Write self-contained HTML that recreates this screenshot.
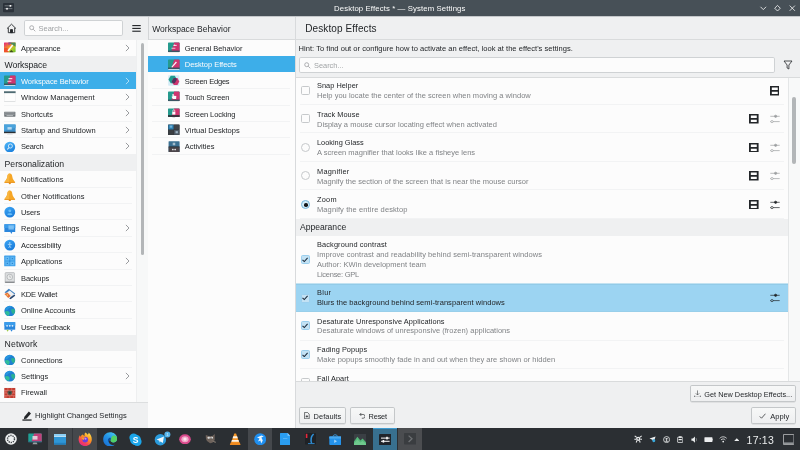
<!DOCTYPE html>
<html><head><meta charset="utf-8"><title>Desktop Effects — System Settings</title>
<style>
html,body{margin:0;padding:0;}
body{width:800px;height:450px;overflow:hidden;background:#eff0f1;position:relative;font-family:"Liberation Sans",sans-serif;color:#232629;font-size:7.5px;}
.abs{position:absolute;}
.t{position:absolute;white-space:nowrap;line-height:1;}
#titlebar{left:0;top:0;width:800px;height:16px;background:#475057;}
#sidebar{left:0;top:39.5px;width:136.5px;height:362px;background:#fcfcfc;overflow:hidden;}
.row{position:absolute;left:0;width:136.5px;height:16.4px;}
.row .lbl{position:absolute;left:21px;top:5.5px;letter-spacing:-0.05px;white-space:nowrap;line-height:1;font-size:7.5px;}
.row.sel{background:#3daee9;color:#fcfcfc;}
.row.hdr{background:#eff0f1;}
.row.hdr .lbl{left:4.5px;font-size:8.7px;top:5.4px;letter-spacing:-0.1px;}
.sepline{position:absolute;height:1px;background:#f2f3f4;}
.ic{position:absolute;left:4.4px;top:2.7px;width:11.6px;height:11.6px;}
.chev{position:absolute;left:125px;top:4.4px;width:5px;height:8px;}
#col2{left:148.3px;top:39.5px;width:146.5px;height:388px;background:#fcfcfc;overflow:hidden;}
#col2 .row{width:146.5px;}
#col2 .row .lbl{left:36.5px;}
#col2 .ic{left:20.1px;}
.btn{position:absolute;box-sizing:border-box;border:0.6px solid #c4c7c9;border-radius:1.8px;background:linear-gradient(#f7f8f8,#eeeff0);box-shadow:0 0.5px 0.5px rgba(0,0,0,0.12);}
.field{position:absolute;box-sizing:border-box;border:0.6px solid #cfd2d4;border-radius:1.8px;background:#fcfcfc;}
#list{left:296px;top:78px;width:491.6px;height:303px;background:#fcfcfc;overflow:hidden;}
.item{position:absolute;left:0;width:491.6px;}
.item .ti{position:absolute;left:21px;white-space:nowrap;line-height:1;font-size:7.35px;color:#232629;}
.item .de{position:absolute;left:21px;white-space:nowrap;line-height:1;font-size:7.5px;color:#808386;}
.cb{position:absolute;left:4.9px;width:9.1px;height:9.1px;box-sizing:border-box;border:0.7px solid #c6c9cb;border-radius:1.6px;background:#fcfcfc;}
.cb.on{border-color:#9bcfee;background:#c3e2f4;}
.rb{position:absolute;left:4.9px;width:9.1px;height:9.1px;box-sizing:border-box;border:0.7px solid #c6c9cb;border-radius:50%;background:#fcfcfc;}
.rb.on{border-color:#74b4da;background:#d3ebf8;}
#taskbar{left:0;top:428px;width:800px;height:22px;background:#2b2f33;}
#root{position:absolute;left:0;top:0;width:800px;height:450px;overflow:hidden;will-change:transform;background:#eff0f1;}
</style></head><body><div id="root">

<div id="titlebar" class="abs"></div>
<div class="abs" style="left:0;top:16px;width:800px;height:1px;background:#c4c7ca;"></div>
<div class="t" style="left:334px;top:5.2px;font-size:7.75px;color:#fcfcfc;letter-spacing:0.118px;">Desktop Effects * — System Settings</div>
<svg class="abs" style="left:3px;top:3.4px" width="11" height="9.2" viewBox="0 0 11 9.2"><rect x="0" y="0" width="11" height="9.2" rx="0.9" fill="#2b323a"/><rect x="1.6" y="2.5" width="7.8" height="0.7" fill="#8d9499"/><rect x="1.6" y="5.4" width="7.8" height="0.7" fill="#8d9499"/><rect x="6.6" y="2" width="1.6" height="1.7" fill="#fcfcfc"/><rect x="3.2" y="4.9" width="1.6" height="1.7" fill="#fcfcfc"/></svg>
<svg class="abs" style="left:756px;top:3px" width="42" height="11" viewBox="0 0 42 11" fill="none" stroke="#fcfcfc" stroke-width="0.8"><path d="M4.5 3.8 L7.3 6.6 L10.1 3.8"/><path d="M21.5 2.4 L24.3 5.2 L21.5 8 L18.7 5.2 Z"/><path d="M33.7 2.6 L38.9 7.8 M38.9 2.6 L33.7 7.8"/></svg>
<div class="abs" style="left:0;top:16.5px;width:148px;height:23px;background:#eff0f1;"></div>
<svg class="abs" style="left:6px;top:23px" width="11" height="11" viewBox="0 0 11 11" fill="none" stroke="#232629" stroke-width="0.9"><path d="M1 5.6 L5.5 1.2 L10 5.6"/><path d="M2.3 4.8 V9.7 H8.7 V4.8"/><path d="M4.5 9.7 V6.6 H6.5 V9.7z" fill="#232629"/></svg>
<div class="field" style="left:24px;top:20.3px;width:99.3px;height:16.2px;"></div>
<svg class="abs" style="left:29px;top:24.7px" width="7.2" height="7.2" viewBox="0 0 8 8" fill="none" stroke="#97999c" stroke-width="0.85"><circle cx="3" cy="3" r="2.2"/><path d="M4.7 4.7 L7 7"/></svg>
<div class="t" style="left:38.5px;top:24.6px;font-size:7.5px;color:#a0a3a5;">Search...</div>
<svg class="abs" style="left:131.8px;top:24px" width="9.4" height="9" viewBox="0 0 10 9"><rect x="0.3" y="0.8" width="9" height="1.2" fill="#232629"/><rect x="0.3" y="3.8" width="9" height="1.2" fill="#232629"/><rect x="0.3" y="6.8" width="9" height="1.2" fill="#232629"/></svg>
<div id="sidebar" class="abs">
<div class="row" style="top:0.0px">
<svg class="ic" viewBox="0 0 12 12"><defs><linearGradient id="ga" x1="0" y1="0" x2="1" y2="1"><stop offset="0" stop-color="#e3207e"/><stop offset="0.5" stop-color="#f4a321"/><stop offset="0.72" stop-color="#a6cf2a"/><stop offset="1" stop-color="#6cbf2a"/></linearGradient></defs><rect x="0" y="0.5" width="12" height="10" rx="0.6" fill="url(#ga)"/><path d="M4.5 0.5 H12 V5 L9 3z" fill="#4a8f5a"/><path d="M4 0.5 H8 L5 3.5z" fill="#9b3aa0" opacity="0.75"/><path d="M0 6.5 L3.5 6 L5 10.5 H0z" fill="#f0502c"/><path d="M3.4 8.8 L8.4 2.6 L9.6 3.6 L5 9.6z" fill="#fcfcfc"/><path d="M5.4 10.5 L7.6 8.4 L10 10.5z" fill="#3f4a1c"/></svg>
<span class="lbl" style="letter-spacing:-0.085px;">Appearance</span>
<svg class="chev" viewBox="0 0 5 8" fill="none" stroke="#808386" stroke-width="0.8"><path d="M0.9 0.9 L4 4 L0.9 7.1"/></svg>
</div>
<div class="row hdr" style="top:16.4px">
<span class="lbl" style="letter-spacing:-0.095px;">Workspace</span>
</div>
<div class="row sel" style="top:32.8px">
<svg class="ic" viewBox="0 0 12 12"><rect x="0" y="0.6" width="12" height="9.6" rx="0.8" fill="#259a8d"/><path d="M6.4 0.6 h4.8 a0.8 0.8 0 0 1 .8 .8 v8.8 h-8.6z" fill="#cf3570"/><rect x="0" y="8.9" width="12" height="1.4" fill="#2f4f5c"/><rect x="0.4" y="10.3" width="11.2" height="0.9" fill="#e4e6e7"/><rect x="4.6" y="3.3" width="4" height="1" fill="#fcfcfc"/><rect x="3.4" y="6" width="4.2" height="1" fill="#f5d6e2"/></svg>
<span class="lbl" style="letter-spacing:-0.081px;">Workspace Behavior</span>
<svg class="chev" viewBox="0 0 5 8" fill="none" stroke="#c9e8f8" stroke-width="0.8"><path d="M0.9 0.9 L4 4 L0.9 7.1"/></svg>
</div>
<div class="row" style="top:49.2px">
<svg class="ic" viewBox="0 0 12 12"><rect x="0.2" y="0.4" width="11.6" height="10.6" fill="#fdfdfd" stroke="#e4e6e7" stroke-width="0.4"/><rect x="0" y="0.3" width="12" height="1.9" fill="#4d6a72"/><rect x="0.2" y="10.4" width="11.6" height="0.8" fill="#d9dbdc"/></svg>
<span class="lbl" style="letter-spacing:0.063px;">Window Management</span>
<svg class="chev" viewBox="0 0 5 8" fill="none" stroke="#808386" stroke-width="0.8"><path d="M0.9 0.9 L4 4 L0.9 7.1"/></svg>
</div>
<div class="sepline" style="left:4px;width:128px;top:65.1px"></div>
<div class="row" style="top:65.6px">
<svg class="ic" viewBox="0 0 12 12"><rect x="0.2" y="3.8" width="11.6" height="5.2" rx="0.4" fill="#71777b"/><rect x="1" y="4.6" width="10" height="0.9" fill="#a9adb0"/><rect x="1" y="6.1" width="10" height="0.9" fill="#9a9ea1"/><rect x="2.6" y="7.5" width="6.8" height="0.8" fill="#c5c8ca"/></svg>
<span class="lbl" style="letter-spacing:0.035px;">Shortcuts</span>
<svg class="chev" viewBox="0 0 5 8" fill="none" stroke="#808386" stroke-width="0.8"><path d="M0.9 0.9 L4 4 L0.9 7.1"/></svg>
</div>
<div class="sepline" style="left:4px;width:128px;top:81.5px"></div>
<div class="row" style="top:82.0px">
<svg class="ic" viewBox="0 0 12 12"><rect x="0" y="0.6" width="12" height="8.2" rx="0.5" fill="#3f8fc8"/><path d="M0 0.6 H12 V4 L0 7z" fill="#4aa3dc"/><rect x="3.6" y="3.2" width="4.4" height="2.6" fill="#cfe6f6" opacity="0.8"/><rect x="0" y="8" width="12" height="1.5" fill="#2b3035"/><rect x="4" y="9.7" width="4" height="0.8" fill="#c9cccf"/><rect x="3" y="10.5" width="6" height="0.7" fill="#dfe1e3"/></svg>
<span class="lbl" style="letter-spacing:0.019px;">Startup and Shutdown</span>
<svg class="chev" viewBox="0 0 5 8" fill="none" stroke="#808386" stroke-width="0.8"><path d="M0.9 0.9 L4 4 L0.9 7.1"/></svg>
</div>
<div class="sepline" style="left:4px;width:128px;top:97.9px"></div>
<div class="row" style="top:98.4px">
<svg class="ic" viewBox="0 0 12 12"><defs><linearGradient id="gs" x1="0.2" y1="0" x2="0.7" y2="1"><stop offset="0" stop-color="#4db5f7"/><stop offset="1" stop-color="#1a7fdc"/></linearGradient></defs><circle cx="6" cy="6.3" r="5.6" fill="url(#gs)"/><circle cx="6.6" cy="5.2" r="2.1" fill="none" stroke="#d9eefc" stroke-width="0.9"/><path d="M5.1 6.8 L3.4 8.8" stroke="#d9eefc" stroke-width="1.1"/></svg>
<span class="lbl" style="letter-spacing:-0.194px;">Search</span>
<svg class="chev" viewBox="0 0 5 8" fill="none" stroke="#808386" stroke-width="0.8"><path d="M0.9 0.9 L4 4 L0.9 7.1"/></svg>
</div>
<div class="row hdr" style="top:114.8px">
<span class="lbl" style="letter-spacing:0.014px;">Personalization</span>
</div>
<div class="row" style="top:131.2px">
<svg class="ic" viewBox="0 0 12 12"><path d="M6 0.6 C4.2 0.6 3.6 2.2 3.4 4 C3.1 6.6 1.6 8.2 0.5 9.4 C0.4 9.9 0.6 10.1 1 10.1 H11 C11.4 10.1 11.6 9.9 11.5 9.4 C10.4 8.2 8.9 6.6 8.6 4 C8.4 2.2 7.8 0.6 6 0.6z" fill="#f6a625"/><path d="M6 0.6 C4.2 0.6 3.6 2.2 3.4 4 C3.1 6.6 1.6 8.2 0.5 9.4 C0.4 9.9 0.6 10.1 1 10.1 H5z" fill="#f8b53f"/><path d="M1 9.3 H11 L11.5 9.7 C11.5 10 11.3 10.1 11 10.1 H1 C0.7 10.1 0.5 10 0.5 9.7z" fill="#e8901a"/><circle cx="6" cy="10.6" r="1.1" fill="#e38a18"/></svg>
<span class="lbl" style="letter-spacing:0.135px;">Notifications</span>
</div>
<div class="sepline" style="left:4px;width:128px;top:147.1px"></div>
<div class="row" style="top:147.6px">
<svg class="ic" viewBox="0 0 12 12"><path d="M6 0.6 C4.2 0.6 3.6 2.2 3.4 4 C3.1 6.6 1.6 8.2 0.5 9.4 C0.4 9.9 0.6 10.1 1 10.1 H11 C11.4 10.1 11.6 9.9 11.5 9.4 C10.4 8.2 8.9 6.6 8.6 4 C8.4 2.2 7.8 0.6 6 0.6z" fill="#f6a625"/><path d="M6 0.6 C4.2 0.6 3.6 2.2 3.4 4 C3.1 6.6 1.6 8.2 0.5 9.4 C0.4 9.9 0.6 10.1 1 10.1 H5z" fill="#f8b53f"/><path d="M1 9.3 H11 L11.5 9.7 C11.5 10 11.3 10.1 11 10.1 H1 C0.7 10.1 0.5 10 0.5 9.7z" fill="#e8901a"/><circle cx="6" cy="10.6" r="1.1" fill="#e38a18"/></svg>
<span class="lbl" style="letter-spacing:0.100px;">Other Notifications</span>
</div>
<div class="sepline" style="left:4px;width:128px;top:163.5px"></div>
<div class="row" style="top:164.0px">
<svg class="ic" viewBox="0 0 12 12"><defs><linearGradient id="gu" x1="0.2" y1="0" x2="0.7" y2="1"><stop offset="0" stop-color="#3aa4f4"/><stop offset="1" stop-color="#1879d8"/></linearGradient></defs><circle cx="6" cy="6.3" r="5.6" fill="url(#gu)"/><circle cx="6" cy="5" r="1.5" fill="#69bdf7"/><path d="M3.2 8.8 C3.6 7 8.4 7 8.8 8.8 C7.6 9.8 4.4 9.8 3.2 8.8z" fill="#69bdf7"/></svg>
<span class="lbl" style="letter-spacing:-0.077px;">Users</span>
</div>
<div class="sepline" style="left:4px;width:128px;top:179.9px"></div>
<div class="row" style="top:180.4px">
<svg class="ic" viewBox="0 0 12 12"><path d="M0.4 1.4 H11.6 V9.2 H8.6 L7.6 11.4 L6.6 9.2 H0.4z" fill="#2a86dc"/><path d="M0.4 1.4 H11.6 V5.2 H0.4z" fill="#3a9bea"/><rect x="4.6" y="2.4" width="5.6" height="4.4" fill="#8fcaf6" opacity="0.8"/></svg>
<span class="lbl" style="letter-spacing:-0.035px;">Regional Settings</span>
<svg class="chev" viewBox="0 0 5 8" fill="none" stroke="#808386" stroke-width="0.8"><path d="M0.9 0.9 L4 4 L0.9 7.1"/></svg>
</div>
<div class="sepline" style="left:4px;width:128px;top:196.3px"></div>
<div class="row" style="top:196.8px">
<svg class="ic" viewBox="0 0 12 12"><circle cx="6" cy="6.3" r="5.6" fill="url(#gu)"/><circle cx="6" cy="4.2" r="0.8" fill="#b8defa"/><path d="M4 5.6 H8 M6 5.6 V7.4 M6 7.4 L4.8 9.2 M6 7.4 L7.2 9.2" stroke="#b8defa" stroke-width="0.8" fill="none"/></svg>
<span class="lbl" style="letter-spacing:-0.050px;">Accessibility</span>
</div>
<div class="sepline" style="left:4px;width:128px;top:212.7px"></div>
<div class="row" style="top:213.2px">
<svg class="ic" viewBox="0 0 12 12"><rect x="0.2" y="0.6" width="11.6" height="11" rx="0.6" fill="#3d9fe9"/><rect x="1.4" y="1.8" width="4" height="3.8" fill="#66bbf4"/><rect x="6.6" y="1.8" width="4" height="3.8" fill="#5ab3f1"/><rect x="1.4" y="6.8" width="4" height="3.8" fill="#5ab3f1"/><rect x="6.6" y="6.8" width="4" height="3.8" fill="#66bbf4"/><circle cx="3.4" cy="3.7" r="0.6" fill="#1f78c8"/><circle cx="8.6" cy="3.7" r="0.6" fill="#1f78c8"/><circle cx="3.4" cy="8.7" r="0.6" fill="#1f78c8"/><circle cx="8.6" cy="8.7" r="0.6" fill="#1f78c8"/><circle cx="6" cy="6.2" r="0.6" fill="#1f78c8"/></svg>
<span class="lbl" style="letter-spacing:0.063px;">Applications</span>
<svg class="chev" viewBox="0 0 5 8" fill="none" stroke="#808386" stroke-width="0.8"><path d="M0.9 0.9 L4 4 L0.9 7.1"/></svg>
</div>
<div class="sepline" style="left:4px;width:128px;top:229.1px"></div>
<div class="row" style="top:229.6px">
<svg class="ic" viewBox="0 0 12 12"><rect x="1.2" y="0.6" width="9.6" height="10.8" rx="0.8" fill="#dcdedf" stroke="#a4a7aa" stroke-width="0.6"/><rect x="1.2" y="9.9" width="9.6" height="1.5" fill="#8a8d90"/><circle cx="6" cy="5.2" r="2.9" fill="#ebecec" stroke="#9b9ea1" stroke-width="0.6"/><path d="M6 3.6 V5.4 H7.4" fill="none" stroke="#9b9ea1" stroke-width="0.6"/></svg>
<span class="lbl" style="letter-spacing:-0.081px;">Backups</span>
</div>
<div class="sepline" style="left:4px;width:128px;top:245.5px"></div>
<div class="row" style="top:246.0px">
<svg class="ic" viewBox="0 0 12 12"><path d="M0.6 4.4 L5 0.8 L11.6 5.6 L7.2 9.6z" fill="#3d7fc0"/><path d="M1.4 5.6 L6 2.6 L10.8 6.4 L6.6 9.6z" fill="#eeeff0"/><path d="M0.4 6.2 L3.6 4.6 L7 8.4 L4.4 10.4z" fill="#e6733a"/><path d="M5.4 10.6 L10.8 6.8 L11.6 8 L6.8 11.6z" fill="#27436b"/><circle cx="3.4" cy="7.2" r="0.8" fill="#f8d66a"/></svg>
<span class="lbl" style="letter-spacing:-0.186px;">KDE Wallet</span>
</div>
<div class="sepline" style="left:4px;width:128px;top:261.9px"></div>
<div class="row" style="top:262.4px">
<svg class="ic" viewBox="0 0 12 12"><circle cx="6" cy="6.3" r="5.6" fill="#1f80d2"/><path d="M1.2 3.6 C3 1.2 6.4 0.4 8.6 1.4 C7.6 2.8 5 3.2 3.6 4.8 C2.6 5.8 1.4 5.6 1.2 3.6z" fill="#2796e0"/><path d="M1 7 C2.4 5.6 4.4 6 5.4 7.2 C6.4 8.4 5.6 10 4.6 11.4 C2.6 10.8 1.2 9 1 7z" fill="#2fbd9b"/><path d="M7.4 4.6 C8.8 3.6 10.6 4 11.4 5.2 C11.8 7 11 8.6 9.8 9.6 C8.4 9 7 6.4 7.4 4.6z" fill="#2bb093"/></svg>
<span class="lbl" style="letter-spacing:0.027px;">Online Accounts</span>
</div>
<div class="sepline" style="left:4px;width:128px;top:278.3px"></div>
<div class="row" style="top:278.8px">
<svg class="ic" viewBox="0 0 12 12"><path d="M0.4 1.2 H11.6 V9 H0.4z" fill="#2a86dc"/><path d="M0.4 1.2 H11.6 V5 H0.4z" fill="#3a9bea"/><path d="M6.6 9 H9 L7.8 11z" fill="#2a86dc"/><path d="M2.6 9 H5 L3.6 11.2z" fill="#9fcf4a"/><circle cx="3.2" cy="5" r="0.9" fill="#e6f3fd"/><circle cx="6" cy="5" r="0.9" fill="#e6f3fd"/><circle cx="8.8" cy="5" r="0.9" fill="#e6f3fd"/></svg>
<span class="lbl" style="letter-spacing:-0.127px;">User Feedback</span>
</div>
<div class="row hdr" style="top:295.2px">
<span class="lbl" style="letter-spacing:0.170px;">Network</span>
</div>
<div class="row" style="top:311.6px">
<svg class="ic" viewBox="0 0 12 12"><circle cx="6" cy="6.3" r="5.6" fill="#1f80d2"/><path d="M1.2 3.6 C3 1.2 6.4 0.4 8.6 1.4 C7.6 2.8 5 3.2 3.6 4.8 C2.6 5.8 1.4 5.6 1.2 3.6z" fill="#2796e0"/><path d="M1 7 C2.4 5.6 4.4 6 5.4 7.2 C6.4 8.4 5.6 10 4.6 11.4 C2.6 10.8 1.2 9 1 7z" fill="#2fbd9b"/><path d="M7.4 4.6 C8.8 3.6 10.6 4 11.4 5.2 C11.8 7 11 8.6 9.8 9.6 C8.4 9 7 6.4 7.4 4.6z" fill="#2bb093"/></svg>
<span class="lbl" style="letter-spacing:-0.008px;">Connections</span>
</div>
<div class="sepline" style="left:4px;width:128px;top:327.5px"></div>
<div class="row" style="top:328.0px">
<svg class="ic" viewBox="0 0 12 12"><circle cx="6" cy="6.3" r="5.6" fill="#1f80d2"/><path d="M1.2 3.6 C3 1.2 6.4 0.4 8.6 1.4 C7.6 2.8 5 3.2 3.6 4.8 C2.6 5.8 1.4 5.6 1.2 3.6z" fill="#2796e0"/><path d="M1 7 C2.4 5.6 4.4 6 5.4 7.2 C6.4 8.4 5.6 10 4.6 11.4 C2.6 10.8 1.2 9 1 7z" fill="#2fbd9b"/><path d="M7.4 4.6 C8.8 3.6 10.6 4 11.4 5.2 C11.8 7 11 8.6 9.8 9.6 C8.4 9 7 6.4 7.4 4.6z" fill="#2bb093"/></svg>
<span class="lbl" style="letter-spacing:0.013px;">Settings</span>
<svg class="chev" viewBox="0 0 5 8" fill="none" stroke="#808386" stroke-width="0.8"><path d="M0.9 0.9 L4 4 L0.9 7.1"/></svg>
</div>
<div class="sepline" style="left:4px;width:128px;top:343.9px"></div>
<div class="row" style="top:344.4px">
<svg class="ic" viewBox="0 0 12 12"><rect x="0.3" y="1" width="11.4" height="10.6" fill="#c43c30"/><g stroke="#e8a59c" stroke-width="0.45"><path d="M0.3 3.6 H11.7 M0.3 6.3 H11.7 M0.3 9 H11.7 M4 1 V3.6 M8 1 V3.6 M2 3.6 V6.3 M6 3.6 V6.3 M10 3.6 V6.3 M4 6.3 V9 M8 6.3 V9 M2 9 V11.6 M6 9 V11.6 M10 9 V11.6"/></g><circle cx="6" cy="6" r="2.5" fill="#4a5a4e" opacity="0.9"/><circle cx="6" cy="6" r="1.1" fill="#2f3a33"/></svg>
<span class="lbl" style="letter-spacing:0.020px;">Firewall</span>
</div>
</div>
<div class="abs" style="left:136.5px;top:39.5px;width:11.5px;height:362px;background:#f7f8f8;"></div>
<div class="abs" style="left:140.6px;top:43px;width:3.8px;height:212.4px;border-radius:2px;background:#b3b6b8;"></div>
<div class="abs" style="left:147.6px;top:17px;width:0.7px;height:22.5px;background:#d3d5d7;"></div><div class="abs" style="left:136.3px;top:39.5px;width:0.6px;height:362px;background:#eeeff0;"></div>
<div class="abs" style="left:0;top:401.5px;width:148.3px;height:26.5px;background:#eff0f1;border-top:0.6px solid #dcdedf;"></div>
<svg class="abs" style="left:22px;top:411px" width="10" height="10" viewBox="0 0 10 10"><path d="M2.4 5.8 L6.8 0.6 L9 2.4 L4.6 7.6 L1.8 8.2z" fill="#232629"/><rect x="0.4" y="8.4" width="9.2" height="1.3" fill="#232629"/></svg>
<div class="t" style="left:35.1px;top:412.3px;font-size:7.5px;letter-spacing:0.027px;">Highlight Changed Settings</div>
<div class="abs" style="left:148.8px;top:16.5px;width:146.5px;height:23px;background:#eff0f1;"></div>
<div class="t" style="left:152.2px;top:25px;font-size:8.5px;letter-spacing:0.007px;">Workspace Behavior</div>
<div class="abs" style="left:148.8px;top:39.2px;width:146.5px;height:0.7px;background:#d9dbdc;"></div>
<div id="col2" class="abs">
<div class="row" style="top:0.0px"><svg class="ic" viewBox="0 0 12 12"><rect x="0" y="0.6" width="12" height="9.6" rx="0.8" fill="#259a8d"/><path d="M6.4 0.6 h4.8 a0.8 0.8 0 0 1 .8 .8 v8.8 h-8.6z" fill="#cf3570"/><rect x="0" y="8.9" width="12" height="1.4" fill="#2f4f5c"/><rect x="0.4" y="10.3" width="11.2" height="0.9" fill="#e4e6e7"/><rect x="5.6" y="3" width="3.4" height="0.9" fill="#fcfcfc"/><path d="M6.4 2.4 L7.6 3.4 L6.4 4.4z" fill="#fcfcfc"/><rect x="3.6" y="6" width="4" height="0.9" fill="#f5d6e2"/></svg><span class="lbl" style="letter-spacing:-0.048px;">General Behavior</span></div>
<div class="row sel" style="top:16.4px"><svg class="ic" viewBox="0 0 12 12"><rect x="0" y="0.6" width="12" height="9.6" rx="0.8" fill="#259a8d"/><path d="M6.4 0.6 h4.8 a0.8 0.8 0 0 1 .8 .8 v8.8 h-8.6z" fill="#cf3570"/><rect x="0" y="8.9" width="12" height="1.4" fill="#2f4f5c"/><rect x="0.4" y="10.3" width="11.2" height="0.9" fill="#e4e6e7"/><path d="M3.4 8.2 L8.2 2.6 L9.2 3.6 L4.4 8.8z" fill="#fcfcfc"/></svg><span class="lbl" style="letter-spacing:-0.026px;">Desktop Effects</span></div>
<div class="row" style="top:32.8px"><svg class="ic" viewBox="0 0 12 12"><rect x="0.2" y="0.3" width="11.6" height="10.9" rx="0.8" fill="#d3ebf5"/><path d="M0.5 4.6 L2.8 0.9 H7 L9.2 4.6 L7 8.6 H2.8z" fill="#1f9b8f"/><path d="M3.8 6.8 L6 3.2 H9.8 L11.7 6.8 L9.8 10.4 H6z" fill="#cf3570"/><path d="M3.8 6.8 L6 3.2 H8.4 L9.2 4.6 L7 8.6 H4.9z" fill="#4d3560"/></svg><span class="lbl" style="letter-spacing:-0.209px;">Screen Edges</span></div>
<div class="sepline" style="left:4px;width:138px;top:48.7px"></div>
<div class="row" style="top:49.2px"><svg class="ic" viewBox="0 0 12 12"><rect x="0" y="0.6" width="12" height="9.6" rx="0.8" fill="#259a8d"/><path d="M6.4 0.6 h4.8 a0.8 0.8 0 0 1 .8 .8 v8.8 h-8.6z" fill="#cf3570"/><rect x="0" y="8.9" width="12" height="1.4" fill="#2f4f5c"/><rect x="0.4" y="10.3" width="11.2" height="0.9" fill="#e4e6e7"/><path d="M4.6 3 L5.8 3 L6 4.8 L8.6 5.2 L8.4 8.4 H5 L3.6 6 L4.6 5.8z" fill="#fcfcfc"/></svg><span class="lbl" style="letter-spacing:-0.105px;">Touch Screen</span></div>
<div class="sepline" style="left:4px;width:138px;top:65.1px"></div>
<div class="row" style="top:65.6px"><svg class="ic" viewBox="0 0 12 12"><rect x="0" y="0.4" width="12" height="8.8" rx="0.6" fill="#259a8d"/><path d="M6.4 0.4 h5 a0.6 0.6 0 0 1 .6 .6 v8.2 h-8.6z" fill="#cf3570"/><rect x="0" y="7.4" width="12" height="1.8" fill="#2a3238"/><rect x="4.4" y="4" width="3.2" height="2.8" fill="#fcfcfc"/><path d="M5 4 V2.8 A1 1 0 0 1 7 2.8 V4" fill="none" stroke="#fcfcfc" stroke-width="0.7"/><rect x="4.6" y="9.6" width="2.8" height="0.7" fill="#c9cccf"/></svg><span class="lbl" style="letter-spacing:-0.078px;">Screen Locking</span></div>
<div class="sepline" style="left:4px;width:138px;top:81.5px"></div>
<div class="row" style="top:82.0px"><svg class="ic" viewBox="0 0 12 12"><rect x="0" y="0.4" width="12" height="11" rx="0.6" fill="#33373b"/><rect x="0.3" y="0.7" width="5.5" height="5" fill="#2d7eae"/><rect x="1.8" y="1.6" width="2.6" height="2.2" fill="#6fb3d8"/><rect x="6.3" y="0.7" width="5.4" height="5" fill="#3f4348"/><rect x="0.3" y="6.2" width="5.5" height="4.9" fill="#3a3e42"/><rect x="6.3" y="6.2" width="5.4" height="4.9" fill="#4d5a66"/><rect x="7.8" y="7.4" width="2.4" height="2.2" fill="#9fb4c4"/></svg><span class="lbl" style="letter-spacing:0.033px;">Virtual Desktops</span></div>
<div class="sepline" style="left:4px;width:138px;top:97.9px"></div>
<div class="row" style="top:98.4px"><svg class="ic" viewBox="0 0 12 12"><rect x="0.6" y="0.2" width="11.4" height="11.2" rx="0.5" fill="#3b7092"/><rect x="0.6" y="6.2" width="11.4" height="5.2" fill="#4b464b"/><rect x="0.6" y="5.6" width="11.4" height="0.9" fill="#2a3036"/><rect x="5" y="1.8" width="0.8" height="2.6" fill="#e8eef2"/><rect x="6.6" y="1.8" width="0.8" height="2.6" fill="#e8eef2"/><circle cx="5" cy="8.8" r="0.9" fill="#e8e8e8"/><circle cx="7.4" cy="8.8" r="0.9" fill="#e8e8e8"/></svg><span class="lbl" style="letter-spacing:0.001px;">Activities</span></div>
<div class="sepline" style="left:4px;width:138px;top:114.3px"></div>
</div>
<div class="abs" style="left:295.3px;top:17px;width:0.8px;height:411px;background:#d8dadc;"></div>
<div class="abs" style="left:296px;top:16.5px;width:504px;height:23px;background:#eff0f1;"></div>
<div class="t" style="left:305.2px;top:23.5px;font-size:10px;letter-spacing:0.110px;">Desktop Effects</div>
<div class="abs" style="left:296px;top:39px;width:504px;height:0.8px;background:#d9dbdc;"></div>
<div class="t" style="left:298.6px;top:44.7px;font-size:7.55px;letter-spacing:0.020px;">Hint: To find out or configure how to activate an effect, look at the effect's settings.</div>
<div class="field" style="left:299px;top:57.2px;width:475.6px;height:16.2px;"></div>
<svg class="abs" style="left:304.2px;top:61.9px" width="7.2" height="7.2" viewBox="0 0 8 8" fill="none" stroke="#97999c" stroke-width="0.85"><circle cx="3" cy="3" r="2.2"/><path d="M4.7 4.7 L7 7"/></svg>
<div class="t" style="left:314px;top:61.7px;font-size:7.4px;color:#a0a3a5;">Search...</div>
<svg class="abs" style="left:783px;top:60px" width="10" height="10" viewBox="0 0 10 10" fill="none" stroke="#232629" stroke-width="0.8"><path d="M1 1 H9 L5.9 5 V9 L4.1 8 V5z"/></svg>
<div class="abs" style="left:296px;top:77.4px;width:504px;height:0.7px;background:#d9dbdc;"></div>
<div id="list" class="abs">
<div class="item" style="top:-2.3px;height:28.5px">
<div class="cb" style="top:10.2px"></div>
<div class="ti" style="top:6.6px;letter-spacing:0.040px;">Snap Helper</div>
<div class="de" style="top:16.5px;letter-spacing:0.026px;">Help you locate the center of the screen when moving a window</div>
<svg class="abs" style="left:473.8px;top:10.45px" width="9.6" height="9.6" viewBox="0 0 10 10"><path fill-rule="evenodd" fill="#232629" d="M0 0 H10 V10 H0z M1.9 1.6 V4.1 H8.1 V1.6z M1.9 5.9 V8.4 H8.1 V5.9z"/></svg>
</div>
<div class="sepline" style="left:4px;width:484px;top:25.7px"></div>
<div class="item" style="top:26.2px;height:28.5px">
<div class="cb" style="top:10.2px"></div>
<div class="ti" style="top:6.6px;letter-spacing:0.036px;">Track Mouse</div>
<div class="de" style="top:16.5px;letter-spacing:0.023px;">Display a mouse cursor locating effect when activated</div>
<svg class="abs" style="left:453px;top:9.85px" width="9.6" height="9.6" viewBox="0 0 10 10"><path fill-rule="evenodd" fill="#232629" d="M0 0 H10 V10 H0z M1.9 1.6 V4.1 H8.1 V1.6z M1.9 5.9 V8.4 H8.1 V5.9z"/></svg>
<svg class="abs" style="left:474px;top:9.85px" width="10" height="10" viewBox="0 0 10 10" fill="none" stroke="#9c9fa1" stroke-width="0.7"><path d="M0.3 2.3 H9.7 M0.3 7.6 H9.7"/><circle cx="5.6" cy="2.3" r="1.15" fill="#9c9fa1"/><circle cx="2" cy="7.6" r="1.1" fill="#fcfcfc"/></svg>
</div>
<div class="sepline" style="left:4px;width:484px;top:54.2px"></div>
<div class="item" style="top:54.7px;height:28.5px">
<div class="rb" style="top:10.2px"></div>
<div class="ti" style="top:6.6px;letter-spacing:0.010px;">Looking Glass</div>
<div class="de" style="top:16.5px;letter-spacing:0.011px;">A screen magnifier that looks like a fisheye lens</div>
<svg class="abs" style="left:453px;top:9.85px" width="9.6" height="9.6" viewBox="0 0 10 10"><path fill-rule="evenodd" fill="#232629" d="M0 0 H10 V10 H0z M1.9 1.6 V4.1 H8.1 V1.6z M1.9 5.9 V8.4 H8.1 V5.9z"/></svg>
<svg class="abs" style="left:474px;top:9.85px" width="10" height="10" viewBox="0 0 10 10" fill="none" stroke="#9c9fa1" stroke-width="0.7"><path d="M0.3 2.3 H9.7 M0.3 7.6 H9.7"/><circle cx="5.6" cy="2.3" r="1.15" fill="#9c9fa1"/><circle cx="2" cy="7.6" r="1.1" fill="#fcfcfc"/></svg>
</div>
<div class="sepline" style="left:4px;width:484px;top:82.7px"></div>
<div class="item" style="top:83.2px;height:28.5px">
<div class="rb" style="top:10.2px"></div>
<div class="ti" style="top:6.6px;letter-spacing:0.263px;">Magnifier</div>
<div class="de" style="top:16.5px;letter-spacing:0.037px;">Magnify the section of the screen that is near the mouse cursor</div>
<svg class="abs" style="left:453px;top:9.85px" width="9.6" height="9.6" viewBox="0 0 10 10"><path fill-rule="evenodd" fill="#232629" d="M0 0 H10 V10 H0z M1.9 1.6 V4.1 H8.1 V1.6z M1.9 5.9 V8.4 H8.1 V5.9z"/></svg>
<svg class="abs" style="left:474px;top:9.85px" width="10" height="10" viewBox="0 0 10 10" fill="none" stroke="#9c9fa1" stroke-width="0.7"><path d="M0.3 2.3 H9.7 M0.3 7.6 H9.7"/><circle cx="5.6" cy="2.3" r="1.15" fill="#9c9fa1"/><circle cx="2" cy="7.6" r="1.1" fill="#fcfcfc"/></svg>
</div>
<div class="sepline" style="left:4px;width:484px;top:111.2px"></div>
<div class="item" style="top:111.7px;height:28.5px">
<div class="rb on" style="top:10.2px"><div style="position:absolute;left:2.05px;top:2.05px;width:3.6px;height:3.6px;border-radius:50%;background:#15171a"></div></div>
<div class="ti" style="top:6.6px;letter-spacing:0.253px;">Zoom</div>
<div class="de" style="top:16.5px;letter-spacing:0.101px;">Magnify the entire desktop</div>
<svg class="abs" style="left:453px;top:9.85px" width="9.6" height="9.6" viewBox="0 0 10 10"><path fill-rule="evenodd" fill="#232629" d="M0 0 H10 V10 H0z M1.9 1.6 V4.1 H8.1 V1.6z M1.9 5.9 V8.4 H8.1 V5.9z"/></svg>
<svg class="abs" style="left:474px;top:9.85px" width="10" height="10" viewBox="0 0 10 10" fill="none" stroke="#232629" stroke-width="0.7"><path d="M0.3 2.3 H9.7 M0.3 7.6 H9.7"/><circle cx="5.6" cy="2.3" r="1.15" fill="#232629"/><circle cx="2" cy="7.6" r="1.1" fill="#fcfcfc"/></svg>
</div>
<div class="sepline" style="left:4px;width:484px;top:139.7px"></div>
<div class="abs" style="left:0;top:141.0px;width:492.5px;height:16.6px;background:#eff0f1;"></div>
<div class="t" style="left:4px;top:144.8px;font-size:8.6px;letter-spacing:-0.018px;">Appearance</div>
<div class="item" style="top:157.6px;height:48px;">
<div class="cb on" style="top:19.8px"><svg style="position:absolute;left:0.6px;top:0.8px" width="6" height="5.6" viewBox="0 0 6 5.6" fill="none" stroke="#1b2a3a" stroke-width="1.05"><path d="M0.5 2.8 L2.3 4.6 L5.6 0.9"/></svg></div>
<div class="ti" style="top:5.6px;letter-spacing:0.141px;">Background contrast</div>
<div class="de" style="top:15.4px;letter-spacing:0.070px;">Improve contrast and readability behind semi-transparent windows</div>
<div class="de" style="top:25.2px;letter-spacing:0.039px;">Author: KWin development team</div>
<div class="de" style="top:35.0px;letter-spacing:-0.260px;">License: GPL</div>
</div>
<div class="item" style="top:206.0px;height:27.6px;background:#9cd4f2;box-shadow:0 -1px 0 #c3e2f1, inset 0 1px 0 #92cbe8, inset 0 -1px 0 #98cfea;">
<div class="cb on" style="top:9.6px"><svg style="position:absolute;left:0.6px;top:0.8px" width="6" height="5.6" viewBox="0 0 6 5.6" fill="none" stroke="#1b2a3a" stroke-width="1.05"><path d="M0.5 2.8 L2.3 4.6 L5.6 0.9"/></svg></div>
<div class="ti" style="top:5.2px;letter-spacing:0.332px;">Blur</div>
<div class="de" style="top:15.0px;color:#232629;letter-spacing:0.062px;">Blurs the background behind semi-transparent windows</div>
<svg class="abs" style="left:474px;top:9.0px" width="10" height="10" viewBox="0 0 10 10" fill="none" stroke="#232629" stroke-width="0.7"><path d="M0.3 2.3 H9.7 M0.3 7.6 H9.7"/><circle cx="5.6" cy="2.3" r="1.15" fill="#232629"/><circle cx="2" cy="7.6" r="1.1" fill="#9cd4f2"/></svg>
</div>
<div class="item" style="top:233.4px;height:28.4px;">
<div class="cb on" style="top:10.0px"><svg style="position:absolute;left:0.6px;top:0.8px" width="6" height="5.6" viewBox="0 0 6 5.6" fill="none" stroke="#1b2a3a" stroke-width="1.05"><path d="M0.5 2.8 L2.3 4.6 L5.6 0.9"/></svg></div>
<div class="ti" style="top:6.2px;letter-spacing:0.097px;">Desaturate Unresponsive Applications</div>
<div class="de" style="top:16.0px;letter-spacing:0.015px;">Desaturate windows of unresponsive (frozen) applications</div>
</div>
<div class="sepline" style="left:4px;width:484px;top:261.6px"></div>
<div class="item" style="top:261.8px;height:28.4px;">
<div class="cb on" style="top:10.0px"><svg style="position:absolute;left:0.6px;top:0.8px" width="6" height="5.6" viewBox="0 0 6 5.6" fill="none" stroke="#1b2a3a" stroke-width="1.05"><path d="M0.5 2.8 L2.3 4.6 L5.6 0.9"/></svg></div>
<div class="ti" style="top:6.1px;letter-spacing:0.058px;">Fading Popups</div>
<div class="de" style="top:15.9px;letter-spacing:0.045px;">Make popups smoothly fade in and out when they are shown or hidden</div>
</div>
<div class="sepline" style="left:4px;width:484px;top:290.2px"></div>
<div class="item" style="top:290.4px;height:28.4px"><div class="cb" style="top:10px"></div><div class="ti" style="top:6.5px;letter-spacing:0.095px;">Fall Apart</div></div>
</div>
<div class="abs" style="left:787.6px;top:78px;width:12.4px;height:303px;background:#f8f9f9;"></div><div class="abs" style="left:787.9px;top:78px;width:0.8px;height:303px;background:#e4e6e7;"></div>
<div class="abs" style="left:792.2px;top:97px;width:3.6px;height:67px;border-radius:2px;background:#b3b6b8;"></div>
<div class="abs" style="left:296px;top:381px;width:504px;height:0.7px;background:#d9dbdc;"></div>
<div class="btn" style="left:689.8px;top:384.8px;width:106px;height:17.4px;"></div>
<svg class="abs" style="left:693.7px;top:389.6px" width="7" height="7.8" viewBox="0 0 8 9" fill="none" stroke="#232629" stroke-width="0.6"><path d="M4 0.5 V5.5 M2 3.8 L4 5.8 L6 3.8"/><path d="M0.8 6.4 L0.4 8.3 H7.6 L7.2 6.4"/></svg>
<div class="t" style="left:704.3px;top:390.7px;font-size:7.32px;letter-spacing:0.010px;">Get New Desktop Effects...</div>
<div class="btn" style="left:298.8px;top:407.3px;width:47px;height:17.2px;"></div>
<svg class="abs" style="left:304px;top:412.2px" width="5.8" height="7.2" viewBox="0 0 7 9" fill="none" stroke="#232629" stroke-width="0.8"><path d="M0.6 0.5 H4.2 L6.4 2.7 V8.5 H0.6z"/><path d="M2 5.5 H5 M3.5 4 V7" stroke-width="0.9"/></svg>
<div class="t" style="left:313.6px;top:412.9px;font-size:7.4px;letter-spacing:0.057px;">Defaults</div>
<div class="btn" style="left:350.3px;top:407.3px;width:44.5px;height:17.2px;"></div>
<svg class="abs" style="left:358.6px;top:411.8px" width="6.6" height="7.4" viewBox="0 0 8 9" fill="none" stroke="#232629" stroke-width="0.8"><path d="M1 3 H5 A2.3 2.3 0 0 1 5 7.6 H3.4"/><path d="M2.8 1.2 L1 3 L2.8 4.8"/></svg>
<div class="t" style="left:368.6px;top:412.9px;font-size:7.4px;letter-spacing:-0.206px;">Reset</div>
<div class="btn" style="left:751.3px;top:407.3px;width:45.2px;height:17.2px;"></div>
<svg class="abs" style="left:759.3px;top:412.7px" width="7.2" height="6.3" viewBox="0 0 8 7" fill="none" stroke="#232629" stroke-width="0.8"><path d="M0.8 3.8 L2.8 5.8 L7.2 0.8"/></svg>
<div class="t" style="left:770.2px;top:412.9px;font-size:7.5px;letter-spacing:0.088px;">Apply</div>
<div id="taskbar" class="abs"></div>
<div class="abs" style="left:48px;top:428.3px;width:24.3px;height:21.7px;background:#45484c;"></div>
<div class="abs" style="left:72.8px;top:428.3px;width:24.3px;height:21.7px;background:#45484c;"></div>
<div class="abs" style="left:248px;top:428.3px;width:24.3px;height:21.7px;background:#45484c;"></div>
<div class="abs" style="left:372.8px;top:428.3px;width:24.4px;height:21.7px;background:#38708f;"></div>
<div class="abs" style="left:372.8px;top:428.3px;width:24.4px;height:1px;background:#3f9bd0;"></div>
<div class="abs" style="left:397.6px;top:428.3px;width:24.2px;height:21.7px;background:#4b4d50;"></div>
<div class="abs" style="left:72.3px;top:428.3px;width:0.6px;height:21.7px;background:#35383c;"></div>
<svg class="abs" style="left:4.6px;top:433.1px" width="12" height="12" viewBox="0 0 12 12"><circle cx="6" cy="6" r="5.8" fill="#eef0f1"/><circle cx="6" cy="6" r="3.5" fill="none" stroke="#3a3f44" stroke-width="1.4" stroke-dasharray="1.3 0.9"/></svg>
<svg class="abs" style="left:28px;top:433.1px" width="14" height="12" viewBox="0 0 14 12"><rect x="0.3" y="0.5" width="13.4" height="8.6" rx="0.6" fill="#1fa196"/><path d="M6 0.5 H13.1 a0.6 0.6 0 0 1 .6 .6 V9.1 H3.5z" fill="#c2407a"/><rect x="4.5" y="3" width="5" height="3.6" fill="#e9e3e8" opacity="0.85"/><rect x="0.3" y="8.2" width="13.4" height="1.2" fill="#2f6f86"/><path d="M5.4 9.4 H8.6 L9.6 11.2 H4.4z" fill="#9aa0a4"/></svg>
<svg class="abs" style="left:54px;top:434.3px" width="12.4" height="10.6" viewBox="0 0 12.4 10.6"><rect x="0" y="0" width="12.4" height="10.6" rx="0.6" fill="#2f96d6"/><rect x="0" y="0" width="12.4" height="2" fill="#8fd0f5"/><rect x="0" y="2" width="12.4" height="0.8" fill="#dff1fb"/><rect x="0" y="8.8" width="12.4" height="1.8" fill="#2380bf"/></svg>
<svg class="abs" style="left:78px;top:432px" width="14.2" height="14.4" viewBox="0 0 14.2 14.4"><defs><linearGradient id="ff" x1="0.85" y1="0.05" x2="0.25" y2="1"><stop offset="0" stop-color="#ffe34d"/><stop offset="0.4" stop-color="#ff931f"/><stop offset="0.75" stop-color="#f5405a"/><stop offset="1" stop-color="#e0268a"/></linearGradient></defs><path d="M7.4 0.4 C8.4 1 9.2 1.8 9.8 2.8 C11 1.6 10.6 0.6 10.6 0.6 C12.8 2.4 13.8 5 13.8 7.4 C13.8 11 10.8 14 7.2 14 C3.4 14 0.6 11 0.6 7.4 C0.6 5.6 1.2 4.2 2 3.2 C2 3.8 2.2 4.4 2.6 4.8 C3 3.4 4 2.6 5 2.4 C5.4 3.4 6.2 3.8 6.8 3.8 C6.2 2.6 6.6 1.2 7.4 0.4z" fill="url(#ff)"/><circle cx="7.2" cy="7.6" r="2.9" fill="#6a3fdc"/><path d="M4 6 C5 5 6.8 5 7.8 6 C6.4 6 5.8 7 6 8 C4.6 8 3.8 7 4 6z" fill="#ff9a2e"/><circle cx="7.6" cy="6.8" r="1" fill="#c98df0"/></svg>
<svg class="abs" style="left:102.8px;top:431.6px" width="14.4" height="14.8" viewBox="0 0 14.4 14.8"><defs><linearGradient id="ed" x1="0" y1="1" x2="0.8" y2="0"><stop offset="0" stop-color="#1668cf"/><stop offset="0.55" stop-color="#2493e6"/><stop offset="1" stop-color="#45c8ee"/></linearGradient></defs><path d="M7.1 0.3 C11.4 0.3 14.2 3.4 14.2 6.6 C14.2 9 12.4 10.4 10.4 10.4 C8.6 10.4 7.6 9.6 7.6 8.6 C7.6 7.8 8 7.4 8 7.4 C6.4 7.6 5.6 9 6 10.6 C6.6 12.6 8.8 13.8 11.6 12.8 C10.4 14 8.8 14.5 7.1 14.5 C3.2 14.5 0.2 11.4 0.2 7.4 C0.2 3.4 3.2 0.3 7.1 0.3z" fill="url(#ed)"/><path d="M8 7.4 C8 5.2 9.6 3.4 11.4 3.6 C13.2 3.8 14.2 5.2 14.2 6.6 C14.2 9 12.4 10.4 10.4 10.4 C8.6 10.4 7.6 9.6 7.6 8.6 C7.6 7.8 8 7.4 8 7.4z" fill="#52d165"/><path d="M8 7.4 C6.4 7.6 5.6 9 6 10.6 C5 9.8 4.6 8.6 5 7.4 C5.4 6.2 6.6 5.6 7.8 5.8 C7.6 6.4 7.8 7 8 7.4z" fill="#0f4f9f"/></svg>
<svg class="abs" style="left:128.6px;top:433px" width="13" height="13.6" viewBox="0 0 13 13.6"><circle cx="4.6" cy="4.8" r="4.2" fill="#1ba6ea"/><circle cx="8.4" cy="8.8" r="4.2" fill="#1ba6ea"/><circle cx="6.5" cy="6.8" r="5.4" fill="#1ba6ea"/><text x="6.5" y="9.9" text-anchor="middle" font-family="Liberation Sans, sans-serif" font-weight="bold" font-size="8.6" fill="#ffffff">S</text></svg>
<svg class="abs" style="left:153.6px;top:431px" width="18" height="15" viewBox="0 0 18 15"><circle cx="6.4" cy="8.8" r="5.7" fill="#2a9bdc"/><path d="M2.6 8.6 L10 5.6 L8.8 12 L6.6 10.4 L5.6 11.6 L5.4 9.8z" fill="#f4fafd"/><circle cx="13.4" cy="3.4" r="3" fill="#56b4ea"/><text x="13.4" y="5" text-anchor="middle" font-family="Liberation Sans, sans-serif" font-size="4.4" fill="#dff1fb">1</text></svg>
<svg class="abs" style="left:179px;top:433.8px" width="12" height="10.6" viewBox="0 0 12 10.6"><ellipse cx="6" cy="5.3" rx="5.8" ry="5" fill="#d94a8c"/><ellipse cx="6" cy="5.3" rx="3.6" ry="3" fill="#f2a7c8"/><circle cx="6" cy="5.1" r="1.7" fill="#fbe6ef"/></svg>
<svg class="abs" style="left:205.4px;top:433px" width="11" height="10.8" viewBox="0 0 13 12.6"><path d="M1 2.4 L4.4 3.6 H8.6 L11.6 1.2 L11.4 6 C12 8.4 10.4 10.6 8.4 11.4 L6 12 L2.4 9.4 C1 8 0.8 5 1 2.4z" fill="#6d625b"/><ellipse cx="4.6" cy="5.6" rx="1.7" ry="1.3" fill="#f3f3f3"/><ellipse cx="8" cy="5.6" rx="1.5" ry="1.2" fill="#f3f3f3"/><circle cx="4.9" cy="5.7" r="0.6" fill="#222"/><circle cx="7.8" cy="5.7" r="0.6" fill="#222"/><path d="M7 8.6 L12.4 11.6 L12.8 10.4z" fill="#8c8077"/></svg>
<svg class="abs" style="left:229.2px;top:432.8px" width="12.4" height="12.6" viewBox="0 0 12.4 12.6"><path d="M5.3 0.6 H7.1 L10.4 10 H2z" fill="#f6982a"/><path d="M4.3 3.2 H8.1 L8.8 5.2 H3.6z" fill="#fdf3e6"/><path d="M2.9 7.1 H9.5 L10.1 8.8 H2.3z" fill="#fdf3e6"/><path d="M1.6 9.6 H10.8 L11.6 12 H0.8z" fill="#f08a1e"/></svg>
<svg class="abs" style="left:254px;top:433px" width="12.4" height="12.4" viewBox="0 0 12.4 12.4"><circle cx="6.2" cy="6.2" r="6" fill="#1f8ff0"/><path d="M3 4.4 L7.4 2.6 L9.8 3.4 L7.4 4.6 L8.8 7.4 L7.2 10.4 L6.4 7.6 L4 8.4 L5.6 5.4z" fill="#eaf5fe"/></svg>
<svg class="abs" style="left:279.6px;top:433.4px" width="10.4" height="12" viewBox="0 0 10.4 12"><path d="M0.6 0 H7.6 L10.4 2.8 V11.4 a0.6 0.6 0 0 1 -.6 .6 H0.6 a0.6 0.6 0 0 1 -.6 -.6 V0.6 a0.6 0.6 0 0 1 .6 -.6z" fill="#2a9df0"/><path d="M7.6 0 L10.4 2.8 H7.6z" fill="#8ccbf7"/><rect x="3" y="5" width="4.4" height="0.9" fill="#5bb5f4"/></svg>
<svg class="abs" style="left:304.6px;top:433px" width="11" height="11.6" viewBox="0 0 11 11.6"><rect x="0" y="0" width="11" height="11.6" rx="0.8" fill="#1f2226"/><rect x="0.8" y="0.8" width="1.6" height="4.2" fill="#e8283c"/><path d="M8.6 1 C6 3.4 5.4 6.4 6.6 10.4" fill="none" stroke="#2f8fd6" stroke-width="1.5"/><path d="M3 10.6 H9.6" stroke="#2f8fd6" stroke-width="0.9"/></svg>
<svg class="abs" style="left:329px;top:433.6px" width="12.4" height="11.2" viewBox="0 0 12.4 11.2"><path d="M4 2.6 C4 0.2 8.4 0.2 8.4 2.6" fill="none" stroke="#3ea3ee" stroke-width="0.9"/><rect x="0.3" y="2.4" width="11.8" height="8.6" rx="0.8" fill="#2492ea"/><rect x="0.3" y="2.4" width="11.8" height="2.2" fill="#49a9f0"/><path d="M5.2 5.4 L8 7.2 L5.2 9z" fill="#9fd3f8"/></svg>
<svg class="abs" style="left:353.8px;top:433.8px" width="12.4" height="11" viewBox="0 0 12.4 11"><rect x="0" y="0" width="12.4" height="11" rx="0.6" fill="#3a3f44"/><path d="M0 11 V7.4 L3.4 2.8 L6.4 6.6 L8.6 4.6 L12.4 8.8 V11z" fill="#55b87a"/><path d="M0 11 V9.4 L3.4 5.6 L6.4 8.6 L8.6 7 L12.4 10 V11z" fill="#6fca8e"/></svg>
<svg class="abs" style="left:378.6px;top:433.6px" width="12.6" height="11.4" viewBox="0 0 12.6 11.4"><rect x="0" y="0" width="12.6" height="11.4" rx="0.9" fill="#20242a"/><rect x="2" y="3.6" width="8.6" height="1" fill="#fcfcfc"/><rect x="2" y="6.8" width="8.6" height="1" fill="#fcfcfc"/><rect x="7.2" y="2.8" width="1.6" height="2.6" fill="#fcfcfc"/><rect x="3.6" y="6" width="1.6" height="2.6" fill="#fcfcfc"/></svg>
<svg class="abs" style="left:403.6px;top:433.4px" width="12.4" height="11.6" viewBox="0 0 12.4 11.6"><rect x="0" y="0" width="12.4" height="11.6" rx="0.8" fill="#3a3d40"/><path d="M4.6 2.6 L8 5.8 L4.6 9" fill="none" stroke="#6d7073" stroke-width="1.3"/></svg>
<svg class="abs" style="left:634px;top:435px" width="8.4" height="8" viewBox="0 0 10 9.6"><circle cx="5" cy="4.6" r="2.5" fill="#eceeef"/><circle cx="5" cy="4.6" r="1" fill="#2b2f33"/><g fill="none" stroke="#eceeef" stroke-width="1.25"><path d="M0.8 1 L3.2 2.9 M9.2 1 L6.8 2.9 M0.4 5 H2.6 M9.6 5 H7.4 M3.6 6.4 L2.6 9 M6.4 6.4 L7.4 9"/></g></svg>
<svg class="abs" style="left:648.8px;top:436px" width="7.2" height="6.6" viewBox="0 0 10.4 9.8"><path d="M0.6 3.6 L9.6 0.6 L6.8 9.2 L4.8 5.4z" fill="#eceeef"/><circle cx="7" cy="7" r="2.2" fill="#39a9dc"/></svg>
<svg class="abs" style="left:663px;top:435.8px" width="7.2" height="7.2" viewBox="0 0 10 10"><circle cx="5" cy="5" r="4.2" fill="none" stroke="#eceeef" stroke-width="1.1"/><path d="M5 7.4 V3 M3.2 4.6 L5 2.8 L6.8 4.6" fill="none" stroke="#eceeef" stroke-width="1.2"/><rect x="3.2" y="6.8" width="3.6" height="1" fill="#eceeef"/></svg>
<svg class="abs" style="left:676.8px;top:435.8px" width="6.4" height="7" viewBox="0 0 9 10"><rect x="0.8" y="1.8" width="7.4" height="7.4" rx="0.6" fill="none" stroke="#eceeef" stroke-width="1.1"/><rect x="2.4" y="0.4" width="4.2" height="2.2" fill="#eceeef"/><rect x="2.2" y="4.2" width="4.6" height="1.8" fill="#eceeef"/></svg>
<svg class="abs" style="left:691px;top:435.8px" width="6.6" height="7.4" viewBox="0 0 9 10"><path d="M0.6 3.4 H2.6 L5.4 0.8 V9.2 L2.6 6.6 H0.6z" fill="#eceeef"/><path d="M6.8 2.8 C7.8 4 7.8 6 6.8 7.2" fill="none" stroke="#9da1a4" stroke-width="0.9"/></svg>
<svg class="abs" style="left:703.8px;top:436.8px" width="9.6" height="5.2" viewBox="0 0 12.6 7"><rect x="0.4" y="0.4" width="10.8" height="6.2" rx="0.6" fill="#eceeef"/><rect x="11.2" y="2.4" width="1" height="2.2" fill="#eceeef"/></svg>
<svg class="abs" style="left:719px;top:435.8px" width="8.4" height="7" viewBox="0 0 11.2 9.6"><g fill="none" stroke="#eceeef" stroke-width="1.1"><path d="M0.8 3.2 C3.6 0.4 7.6 0.4 10.4 3.2"/><path d="M2.6 5.4 C4.4 3.6 6.8 3.6 8.6 5.4"/></g><circle cx="5.6" cy="7.6" r="1.2" fill="#eceeef"/></svg>
<svg class="abs" style="left:733.6px;top:438px" width="5.6" height="3.2" viewBox="0 0 7 4"><path d="M0.2 3.8 L3.5 0.4 L6.8 3.8z" fill="#eceeef"/></svg>
<div class="t" style="left:746.6px;top:435px;font-size:10.5px;letter-spacing:0.22px;color:#eceeef;">17:13</div>
<svg class="abs" style="left:783px;top:434px" width="11.4" height="11" viewBox="0 0 11.4 11"><rect x="0.4" y="0.4" width="10.6" height="10.2" rx="0.5" fill="none" stroke="#c9cbcd" stroke-width="0.8"/><rect x="0.8" y="8.4" width="9.8" height="1.8" fill="#8e9295"/></svg>
</div></body></html>
